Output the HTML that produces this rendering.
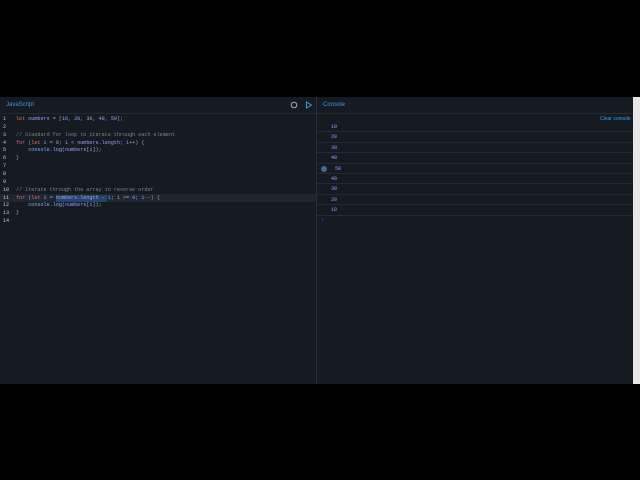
<!DOCTYPE html>
<html><head><style>
*{margin:0;padding:0;box-sizing:border-box}
body{width:640px;height:480px;background:#000;position:relative;overflow:hidden;font-family:"Liberation Mono",monospace}
.app{position:absolute;left:0;top:97px;width:633px;height:287px;background:#161b22}
.sb{position:absolute;left:633px;top:97px;width:7px;height:287px;background:#e8e8e8}
.hdr{position:absolute;top:0;height:17px;border-bottom:1px solid #222a33;font-family:"Liberation Sans",sans-serif;font-size:6px;color:#3b9ce0;line-height:17px}
.div{position:absolute;left:316px;top:0;width:1px;height:287px;background:#28303a}
.code{position:absolute;left:0;top:19px;font-size:5.1px;color:#9aa6b4}
.ln{position:absolute;height:7.85px;line-height:7.85px;white-space:pre}
.num{position:absolute;left:3px;width:8px;color:#c8ccd0}
.txt{position:absolute;left:16px}
.k{color:#e06c75}.v{color:#9b9bff}.c{color:#7d8590}.n{color:#7fb2ff}
.row{position:absolute;left:317px;width:316px;height:10.4px;border-bottom:1px solid #222a33;font-size:5px;color:#9b9bff;line-height:10px}
</style></head><body>
<div class="app">
<div class="hdr" style="left:0;width:316px;padding-left:6px">JavaScript
<svg style="position:absolute;left:290px;top:4px" width="8" height="8"><circle cx="4" cy="4" r="2.8" fill="none" stroke="#aab" stroke-width="1"/></svg>
<svg style="position:absolute;left:305px;top:4px" width="8" height="8"><path d="M1.5 1 L6.5 4 L1.5 7 Z" fill="none" stroke="#3b9ce0" stroke-width="1"/></svg>
</div>
<div class="hdr" style="left:317px;width:316px;padding-left:6px">Console</div>
<div class="div"></div>
<div style="position:absolute;left:0;top:97px;width:316px;height:8px;background:#1e2630"></div>
<div style="position:absolute;left:56px;top:97.5px;width:51px;height:7px;background:#264466"></div>
<div class="code">
<div class="ln" style="top:0"><span class="num">1</span><span class="txt"><span class="k">let</span> <span class="v">numbers</span> = [<span class="n">10</span>, <span class="n">20</span>, <span class="n">30</span>, <span class="n">40</span>, <span class="n">50</span>];</span></div>
<div class="ln" style="top:7.85px"><span class="num">2</span></div>
<div class="ln" style="top:15.7px"><span class="num">3</span><span class="txt c">// Standard for loop to iterate through each element</span></div>
<div class="ln" style="top:23.55px"><span class="num">4</span><span class="txt"><span class="k">for</span> (<span class="k">let</span> <span class="v">i</span> = <span class="n">0</span>; <span class="v">i</span> &lt; <span class="v">numbers</span>.<span class="v">length</span>; <span class="v">i</span>++) {</span></div>
<div class="ln" style="top:31.4px"><span class="num">5</span><span class="txt">    <span class="n">console</span>.<span class="n">log</span>(<span class="v">numbers</span>[<span class="v">i</span>]);</span></div>
<div class="ln" style="top:39.25px"><span class="num">6</span><span class="txt">}</span></div>
<div class="ln" style="top:47.1px"><span class="num">7</span></div>
<div class="ln" style="top:54.95px"><span class="num">8</span></div>
<div class="ln" style="top:62.8px"><span class="num">9</span></div>
<div class="ln" style="top:70.65px"><span class="num">10</span><span class="txt c">// Iterate through the array in reverse order</span></div>
<div class="ln" style="top:78.5px"><span class="num">11</span><span class="txt"><span class="k">for</span> (<span class="k">let</span> <span class="v">i</span> = <span class="v">numbers</span>.<span class="v">length</span> - <span class="n">1</span>; <span class="v">i</span> &gt;= <span class="n">0</span>; <span class="v">i</span>--) {</span></div>
<div class="ln" style="top:86.35px"><span class="num">12</span><span class="txt">    <span class="n">console</span>.<span class="n">log</span>(<span class="v">numbers</span>[<span class="v">i</span>]);</span></div>
<div class="ln" style="top:94.2px"><span class="num">13</span><span class="txt">}</span></div>
<div class="ln" style="top:102.05px"><span class="num">14</span></div>
</div>
<div style="position:absolute;left:600px;top:19px;font-family:'Liberation Sans',sans-serif;font-size:5px;color:#3b9ce0">Clear console</div>
<div class="row" style="top:25px;padding-left:14px">10</div>
<div class="row" style="top:35.4px;padding-left:14px">20</div>
<div class="row" style="top:45.8px;padding-left:14px">30</div>
<div class="row" style="top:56.2px;padding-left:14px">40</div>
<div class="row" style="top:66.6px;padding-left:18px"><span style="position:absolute;left:4px;top:2.5px;width:6px;height:6px;border-radius:50%;background:#4a6a8a"></span>50</div>
<div class="row" style="top:77px;padding-left:14px">40</div>
<div class="row" style="top:87.4px;padding-left:14px">30</div>
<div class="row" style="top:97.8px;padding-left:14px">20</div>
<div class="row" style="top:108.2px;padding-left:14px">10</div>
<div style="position:absolute;left:321px;top:120px;font-size:5px;color:#3b9ce0">›</div>
</div>
<div class="sb"></div>
</body></html>
